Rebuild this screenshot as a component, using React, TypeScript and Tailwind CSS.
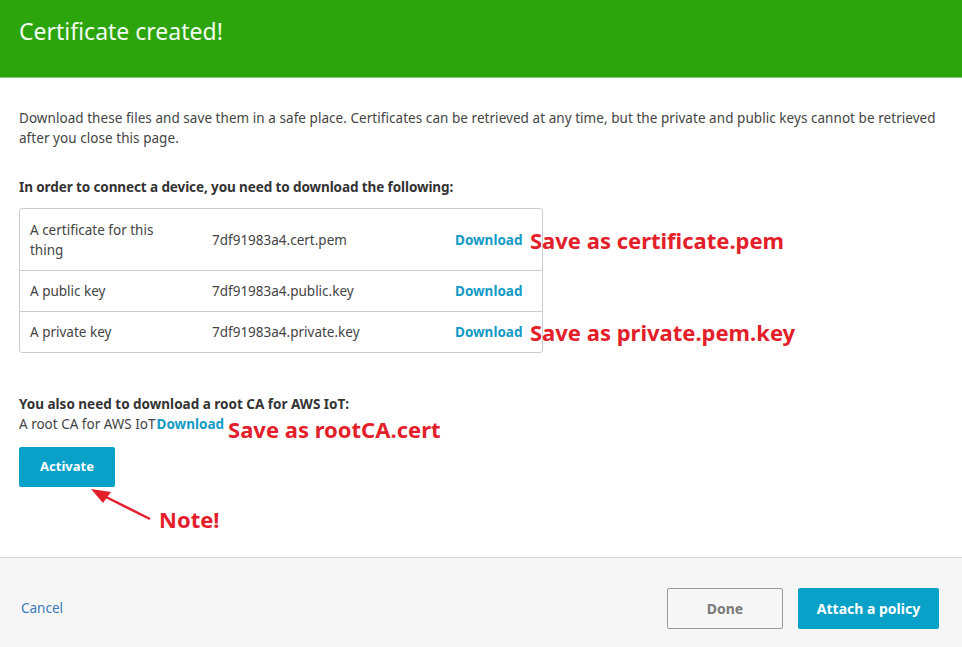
const rows = [
  { label: "A certificate for this thing", file: "7df91983a4.cert.pem", note: "Save as certificate.pem", h: "h-[61px]" },
  { label: "A public key", file: "7df91983a4.public.key", note: "", h: "h-[41px]" },
  { label: "A private key", file: "7df91983a4.private.key", note: "Save as private.pem.key", h: "h-[41px]" },
];

const Note = ({ children, className = "" }: { children: React.ReactNode; className?: string }) => (
  <span
    className={`text-[22px] leading-none font-bold text-[#e3202a] whitespace-nowrap ${className}`}
    style={{ fontFamily: '"Noto Sans", sans-serif' }}
  >
    {children}
  </span>
);

export default function App() {
  return (
    <div
      className="w-[962px] h-[647px] bg-white flex flex-col text-[13.5px] text-[#444] overflow-hidden"
      style={{ fontFamily: '"Noto Sans", "Open Sans", sans-serif' }}
    >
      <div className="h-[78px] shrink-0 bg-[#2ca40b] border-b border-[#8fcb7e] px-[19px] pt-[16px]">
        <h1 className="text-[23px] leading-[30px] text-[#f2fbef]">Certificate created!</h1>
      </div>

      <div className="flex-1 px-[19px] pt-[30px]">
        <p className="leading-[20px] tracking-[0.05px]">
          Download these files and save them in a safe place. Certificates can be retrieved at any time, but the private and public keys cannot be retrieved
          <br />
          after you close this page.
        </p>

        <p className="mt-[29px] leading-[20px] font-bold text-[#333] tracking-[-0.1px]">
          In order to connect a device, you need to download the following:
        </p>

        <div className="relative mt-[11px] w-[524px] border border-[#ccc] rounded-[3px]">
          {rows.map((r, i) => (
            <div
              key={r.file}
              className={`relative flex items-center ${r.h} ${i > 0 ? "border-t border-[#ccc]" : ""}`}
            >
              <div className="w-[192px] pl-[10px] pr-[40px] leading-[20px]">{r.label}</div>
              <div className="w-[243px] leading-[20px]">{r.file}</div>
              <div className="font-bold text-[#139ac5] leading-[20px]">Download</div>
              {r.note && <Note className="absolute left-[510px] top-1/2 -translate-y-1/2">{r.note}</Note>}
            </div>
          ))}
        </div>

        <p className="mt-[41px] leading-[20px] font-bold text-[#333]">You also need to download a root CA for AWS IoT:</p>
        <div className="flex items-start leading-[20px]">
          <span>A root CA for AWS IoT</span>
          <span className="font-bold text-[#139ac5] ml-[1px]">Download</span>
          <Note className="ml-[4px] mt-[4px]">Save as rootCA.cert</Note>
        </div>

        <button className="mt-[7px] w-[96px] h-[40px] rounded-[2px] bg-[#0aa1c9] text-white font-bold text-[13px]">
          Activate
        </button>

        <div className="flex items-start h-[50px]">
          <svg width="159" height="40" viewBox="0 0 159 40" className="-ml-[19px]">
            <line x1="150" y1="32" x2="100" y2="7" stroke="#e3202a" strokeWidth="2.5" />
            <polygon points="91,2 111,5 103,16" fill="#e3202a" />
          </svg>
          <Note className="mt-[21px]">Note!</Note>
        </div>
      </div>

      <div className="h-[90px] shrink-0 bg-[#f6f6f6] border-t border-[#d5d5d5] flex items-start pt-[30px] px-[21px]">
        <span className="mt-[10px] leading-[20px] text-[#3a7ab8]">Cancel</span>
        <div className="ml-auto flex gap-[15px] mr-[2px]">
          <button className="w-[116px] h-[41px] border border-[#999] rounded-[2px] bg-[#f6f6f6] text-[#7a7a7a] font-bold text-[14px]">
            Done
          </button>
          <button className="w-[141px] h-[41px] rounded-[2px] bg-[#0aa1c9] text-white font-bold text-[14px]">
            Attach a policy
          </button>
        </div>
      </div>
    </div>
  );
}
